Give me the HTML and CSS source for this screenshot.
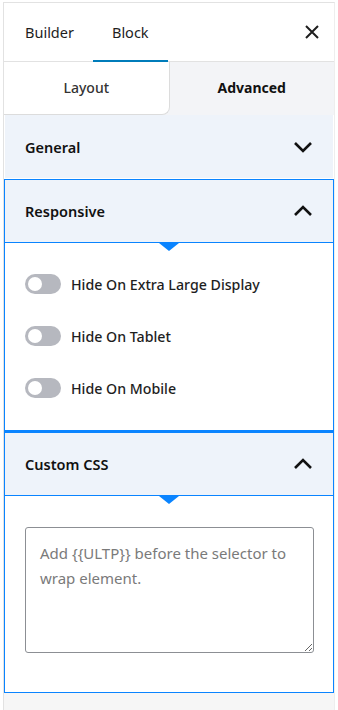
FILE: index.html
```html
<!DOCTYPE html>
<html lang="en">
<head>
    <meta charset="UTF-8">
    <meta name="viewport" content="width=device-width, initial-scale=1.0">
    <title>Block Settings</title>
    <link rel="stylesheet" href="styles.css">
</head>
<body>
    <div class="sidebar">
        <div class="top-tabs">
            <span class="top-tab">Builder</span>
            <span class="top-tab active">Block</span>
            <button class="close-btn" aria-label="Close">
                <svg width="16" height="16" viewBox="0 0 16 16"><path d="M2 2 L14 14 M14 2 L2 14" stroke="#1e1e1e" stroke-width="2" fill="none"/></svg>
            </button>
        </div>

        <div class="sub-tabs">
            <div class="sub-tab active">Layout</div>
            <div class="sub-tab">Advanced</div>
        </div>

        <div class="section">
            <div class="section-head">
                <span>General</span>
                <svg class="chevron" width="20" height="12" viewBox="0 0 20 12"><path d="M2 2 L10 10 L18 2" stroke="#111" stroke-width="2.6" fill="none"/></svg>
            </div>
        </div>

        <div class="section open">
            <div class="section-head">
                <span>Responsive</span>
                <svg class="chevron" width="20" height="12" viewBox="0 0 20 12"><path d="M2 10 L10 2 L18 10" stroke="#111" stroke-width="2.6" fill="none"/></svg>
            </div>
            <div class="section-body toggles">
                <label class="toggle-row"><span class="toggle"></span> Hide On Extra Large Display</label>
                <label class="toggle-row"><span class="toggle"></span> Hide On Tablet</label>
                <label class="toggle-row"><span class="toggle"></span> Hide On Mobile</label>
            </div>
        </div>

        <div class="section open">
            <div class="section-head">
                <span>Custom CSS</span>
                <svg class="chevron" width="20" height="12" viewBox="0 0 20 12"><path d="M2 10 L10 2 L18 10" stroke="#111" stroke-width="2.6" fill="none"/></svg>
            </div>
            <div class="section-body css-body">
                <textarea class="css-input" placeholder="Add {{ULTP}} before the selector to wrap element."></textarea>
            </div>
        </div>
    </div>
</body>
</html>
```

FILE: styles.css
```css
* {
    box-sizing: border-box;
}
body {
    margin: 0;
    background-color: #fff;
    font-family: "Noto Sans", "Open Sans", sans-serif;
    color: #1e1e1e;
}
.sidebar {
    margin: 2px 3px 0 3px;
    min-height: 708px;
    border-top: 1px solid #e2e2e2;
    border-left: 1px solid #e2e2e2;
    border-right: 1px solid #eeeeee;
    background-color: #f6f6f6;
}
.top-tabs {
    display: flex;
    align-items: stretch;
    height: 59px;
    background-color: #fff;
    border-bottom: 1px solid #e2e2e2;
    padding-left: 2px;
}
.top-tab {
    display: flex;
    align-items: center;
    padding: 0 19px;
    font-size: 14.5px;
    border-bottom: 2px solid transparent;
    margin-bottom: -1px;
}
.top-tab.active {
    border-bottom-color: #007cba;
}
.close-btn {
    margin-left: auto;
    margin-right: 14px;
    border: none;
    background: none;
    padding: 0;
    display: flex;
    align-items: center;
}
.sub-tabs {
    display: flex;
    height: 53px;
    background-color: #f3f4f7;
}
.sub-tab {
    flex: 1;
    display: flex;
    align-items: center;
    justify-content: center;
    font-size: 14px;
    font-weight: 700;
    color: #111;
    padding-bottom: 2px;
}
.sub-tab.active {
    background-color: #fff;
    font-weight: 500;
    color: #333;
    border-right: 1px solid #dcdcdc;
    border-bottom: 1px solid #dcdcdc;
    border-bottom-right-radius: 8px;
}
.section {
    background-color: #fff;
    border: 1px solid transparent;
    border-top: none;
}
.section.open {
    border: 1px solid #0a84ff;
}
.section.open + .section.open {
    border-top-width: 2px;
}
.section-head {
    display: flex;
    align-items: center;
    justify-content: space-between;
    height: 63px;
    padding: 0 20px 0 20px;
    background-color: #eef3fa;
    font-size: 14.5px;
    font-weight: 600;
    color: #111;
}
.section.open .section-head {
    position: relative;
    border-bottom: 1px solid #0a84ff;
}
.section.open .section-head::after {
    content: "";
    position: absolute;
    left: 50%;
    bottom: -9px;
    margin-left: -10px;
    border-left: 10px solid transparent;
    border-right: 10px solid transparent;
    border-top: 8px solid #0a84ff;
}
.toggles {
    display: flex;
    flex-direction: column;
    gap: 32px;
    padding: 31px 20px 32px 20px;
}
.toggle-row {
    display: flex;
    align-items: center;
    gap: 10px;
    font-size: 14.2px;
    font-weight: 500;
    color: #1e1e1e;
}
.toggle {
    position: relative;
    width: 36px;
    height: 20px;
    border-radius: 10px;
    background-color: #b6b8bf;
}
.toggle::after {
    content: "";
    position: absolute;
    left: 3px;
    top: 3px;
    width: 14px;
    height: 14px;
    border-radius: 50%;
    background-color: #fff;
}
.css-body {
    padding: 31px 20px 39px 20px;
}
.css-input {
    display: block;
    width: 289px;
    height: 126px;
    padding: 13px 14px;
    border: 1px solid #8c8f94;
    border-radius: 3px;
    font-family: inherit;
    font-size: 15px;
    line-height: 25px;
    color: #333;
}
.css-input::placeholder {
    color: #7a7a7a;
}
```
